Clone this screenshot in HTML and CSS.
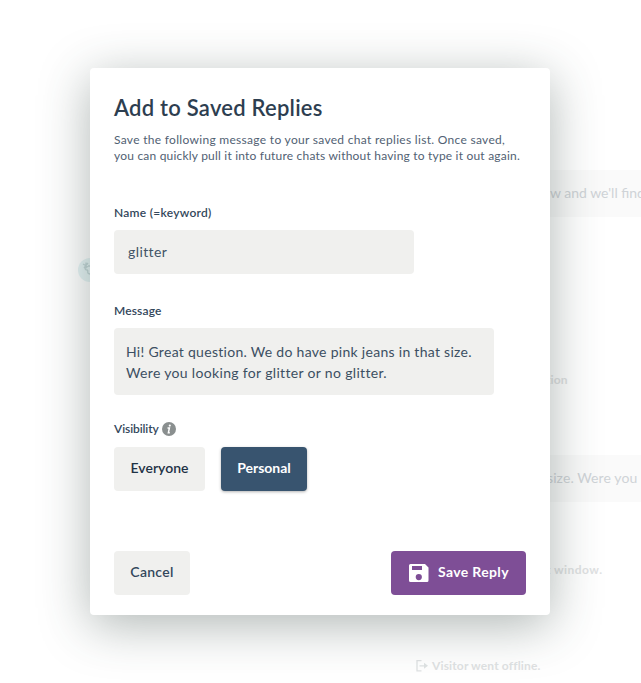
FILE: index.html
```html
<!DOCTYPE html>
<html lang="en">
<head>
  <meta charset="UTF-8" />
  <meta name="viewport" content="width=device-width, initial-scale=1" />
  <title>Add to Saved Replies</title>
  <link rel="stylesheet" href="styles.css">
</head>
<body>
  <!-- Chat behind the dialog -->
  <div class="chat">
    <div class="bubble first">w and we'll find</div>
    <div class="avatar">
      <svg width="24" height="24" viewBox="0 0 24 24" fill="none" stroke="#c3d6d7" stroke-width="1.3">
        <path d="M5 6l5 3M8 4.500v6M10 5l-4 5M9 9c-3 1-2 3 0 3s-1 4 3 4M10 8h5" />
      </svg>
    </div>
    <div class="status question">tion</div>
    <div class="bubble second">size. Were you l</div>
    <div class="status window">t window.</div>
    <div class="status offline">
      <svg width="12" height="12" viewBox="0 0 12 12" fill="none" stroke="currentColor" stroke-width="1.3">
        <path d="M5.500 .7H1v10.100h4.500M3.500 5.800h6" />
        <path d="M8 2.800v6l4-3z" fill="currentColor" stroke="none" />
      </svg>
      <span>Visitor went offline.</span>
    </div>
  </div>

  <div class="modal">
    <h2>Add to Saved Replies</h2>
    <p class="description">
      <span class="line-one">Save the following message to your saved chat replies list. Once saved,</span><br>
      <span class="line-two">you can quickly pull it into future chats without having to type it out again.</span>
    </p>

    <div class="field">
      <label class="label-name" for="name">Name (=keyword)</label>
      <input type="text" id="name" value="glitter" />
    </div>

    <div class="field message-field">
      <label class="label-message">Message</label>
      <div class="message">
        <span class="message-one">Hi! Great question. We do have pink jeans in that size.</span><br>
        <span class="message-two">Were you looking for glitter or no glitter.</span>
      </div>
    </div>

    <div class="field visibility">
      <div class="label-row">
        <label class="label-visibility">Visibility</label>
        <svg width="14" height="14" viewBox="0 0 14 14">
          <circle cx="7" cy="7" r="7" fill="#8a8f8f" />
          <circle cx="7.800" cy="3.600" r="1.100" fill="#fff" />
          <path d="M5.500 6h1.900L6.400 10.700h1.400" fill="none" stroke="#fff" stroke-width="1.500" />
        </svg>
      </div>
      <div class="options">
        <button class="btn everyone">Everyone</button>
        <button class="btn personal">Personal</button>
      </div>
    </div>

    <div class="actions">
      <button class="btn cancel">Cancel</button>
      <button class="btn save">
        <svg width="20" height="18" viewBox="0 0 20 18">
          <path fill="#fff" fill-rule="evenodd" d="M1.500 0H16l3.500 3.500v13a1.500 1.500 0 0 1-1.500 1.500H1.500A1.500 1.500 0 0 1 0 16.500v-15A1.500 1.500 0 0 1 1.500 0zM3 2v4h10V2zM9.800 10a3.100 3.100 0 1 0 0 6.200 3.100 3.100 0 0 0 0-6.200z" />
        </svg>
        <span>Save Reply</span>
      </button>
    </div>
  </div>
</body>
</html>
```

FILE: styles.css
```css
* {
  box-sizing: border-box;
}

body {
  font-family: Lato, sans-serif;
  margin: 0;
  height: 683px;
  background: #fff;
  color: #33475b;
  position: relative;
  overflow: hidden;
}

.chat {
  height: 683px;
  padding-top: 170px;
  overflow: hidden;
}

.bubble {
  height: 47px;
  margin-left: 540px;
  background: #fafafa;
  color: #cfd3d7;
  font-size: 14px;
  line-height: 46px;
  white-space: nowrap;
}

.bubble.first {
  padding-left: 10px;
}

.bubble.second {
  padding-left: 7px;
  letter-spacing: 0.1px;
}

.avatar {
  width: 24px;
  height: 24px;
  margin: 41px 0 0 78px;
  border-radius: 50%;
  background: #e6f4f5;
}

.avatar svg {
  display: block;
}

.status {
  height: 16px;
  margin-left: 546px;
  color: #dfe2e3;
  font-size: 12px;
  font-weight: 700;
  line-height: 16px;
  letter-spacing: 0.15px;
}

.question {
  margin-top: 90px;
  margin-bottom: 67px;
}

.window {
  margin-top: 60px;
  letter-spacing: 0.45px;
}

.offline {
  display: flex;
  align-items: center;
  gap: 4px;
  margin-top: 80px;
  margin-left: 416px;
}

.modal {
  position: absolute;
  top: 68px;
  left: 90px;
  width: 460px;
  height: 547px;
  padding: 27px 24px 20px;
  background: #fff;
  border-radius: 4px;
  box-shadow: 0 10px 50px rgba(45, 62, 58, 0.38);
}

h2 {
  margin: 0;
  color: #2d3e50;
  font-size: 22px;
  font-weight: 600;
  line-height: 26px;
  letter-spacing: 0.23px;
}

.description {
  margin: 11px 0 0;
  color: #516173;
  font-size: 12px;
  line-height: 16px;
  white-space: nowrap;
}

.line-one {
  letter-spacing: 0.3px;
}

.line-two {
  letter-spacing: 0.2px;
}

.field {
  margin-top: 29px;
}

.description + .field {
  margin-top: 41px;
}

label {
  display: block;
  font-size: 12px;
  font-weight: 600;
  line-height: 16px;
}

.label-name {
  letter-spacing: 0.27px;
}

.label-message {
  letter-spacing: 0.15px;
}

.label-visibility {
  letter-spacing: -0.1px;
}

input {
  display: block;
  width: 300px;
  height: 44px;
  margin-top: 9px;
  padding: 0 14px 2px;
  border: none;
  border-radius: 4px;
  background: #f0f0ee;
  color: #425466;
  font-family: inherit;
  font-size: 14px;
  letter-spacing: 0.4px;
}

.message {
  width: 380px;
  height: 67px;
  margin-top: 9px;
  padding: 13px 12px 0;
  border-radius: 4px;
  background: #f0f0ee;
  color: #3c4f62;
  font-size: 14px;
  line-height: 21px;
  white-space: nowrap;
}

.message-one {
  letter-spacing: 0.29px;
}

.message-two {
  letter-spacing: 0.33px;
}

.visibility {
  margin-top: 26px;
}

.label-row {
  display: flex;
  align-items: center;
  gap: 3px;
}

.options {
  display: flex;
  gap: 16px;
  margin-top: 10px;
}

.btn {
  height: 44px;
  padding: 0 0 3px;
  border: none;
  border-radius: 4px;
  background: #f0f0ee;
  color: #33475b;
  font-family: inherit;
  font-size: 14px;
  font-weight: 600;
  cursor: pointer;
}

.everyone {
  width: 91px;
  color: #1f3245;
}

.personal {
  width: 86px;
  background: #38546f;
  color: #fff;
  font-weight: 700;
  box-shadow: 0 1px 3px rgba(0, 0, 0, 0.3);
}

.actions {
  display: flex;
  justify-content: space-between;
  margin-top: 60px;
}

.cancel {
  width: 76px;
  letter-spacing: 0.3px;
}

.save {
  display: flex;
  align-items: center;
  gap: 9px;
  width: 135px;
  padding-left: 18px;
  background: #7e4e96;
  color: #fff;
  font-weight: 700;
  letter-spacing: 0.35px;
}

.save svg {
  margin-top: 3px;
}
```
